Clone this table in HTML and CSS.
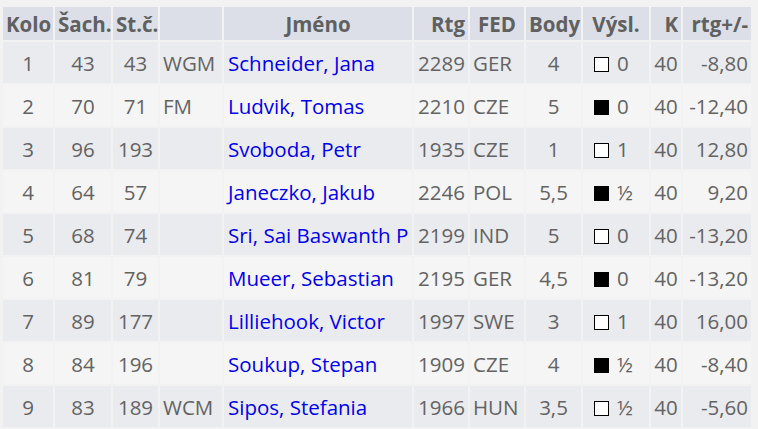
FILE: index.html
```html
<!DOCTYPE html>
<html lang="cs">
<head>
<meta charset="utf-8">
<link rel="stylesheet" href="styles.css">
</head>
<body>
<table class="games">
  <colgroup>
    <col class="w-kolo"><col class="w-sach"><col class="w-stc"><col class="w-tit"><col class="w-name">
    <col class="w-rtg"><col class="w-fed"><col class="w-body"><col class="w-res"><col class="w-k"><col class="w-diff">
  </colgroup>
  <thead>
    <tr>
      <th>Kolo</th><th>Šach.</th><th>St.č.</th><th></th><th>Jméno</th>
      <th class="r">Rtg</th><th>FED</th><th>Body</th><th>Výsl.</th><th class="r">K</th><th class="r">rtg+/-</th>
    </tr>
  </thead>
  <tbody>
    <tr class="odd"><td class="c">1</td><td class="c">43</td><td class="c">43</td><td class="tit">WGM</td><td class="name"><a href="#">Schneider, Jana</a></td><td class="r">2289</td><td class="fed">GER</td><td class="c">4</td><td class="res"><span class="sq w"></span>0</td><td class="k">40</td><td class="r d">-8,80</td></tr>
    <tr class="even"><td class="c">2</td><td class="c">70</td><td class="c">71</td><td class="tit">FM</td><td class="name"><a href="#">Ludvik, Tomas</a></td><td class="r">2210</td><td class="fed">CZE</td><td class="c">5</td><td class="res"><span class="sq b"></span>0</td><td class="k">40</td><td class="r d">-12,40</td></tr>
    <tr class="odd"><td class="c">3</td><td class="c">96</td><td class="c">193</td><td class="tit"></td><td class="name"><a href="#">Svoboda, Petr</a></td><td class="r">1935</td><td class="fed">CZE</td><td class="c">1</td><td class="res"><span class="sq w"></span>1</td><td class="k">40</td><td class="r d">12,80</td></tr>
    <tr class="even"><td class="c">4</td><td class="c">64</td><td class="c">57</td><td class="tit"></td><td class="name"><a href="#">Janeczko, Jakub</a></td><td class="r">2246</td><td class="fed">POL</td><td class="c">5,5</td><td class="res"><span class="sq b"></span>½</td><td class="k">40</td><td class="r d">9,20</td></tr>
    <tr class="odd"><td class="c">5</td><td class="c">68</td><td class="c">74</td><td class="tit"></td><td class="name"><a href="#">Sri, Sai Baswanth P</a></td><td class="r">2199</td><td class="fed">IND</td><td class="c">5</td><td class="res"><span class="sq w"></span>0</td><td class="k">40</td><td class="r d">-13,20</td></tr>
    <tr class="even"><td class="c">6</td><td class="c">81</td><td class="c">79</td><td class="tit"></td><td class="name"><a href="#">Mueer, Sebastian</a></td><td class="r">2195</td><td class="fed">GER</td><td class="c">4,5</td><td class="res"><span class="sq b"></span>0</td><td class="k">40</td><td class="r d">-13,20</td></tr>
    <tr class="odd"><td class="c">7</td><td class="c">89</td><td class="c">177</td><td class="tit"></td><td class="name"><a href="#">Lilliehook, Victor</a></td><td class="r">1997</td><td class="fed">SWE</td><td class="c">3</td><td class="res"><span class="sq w"></span>1</td><td class="k">40</td><td class="r d">16,00</td></tr>
    <tr class="even"><td class="c">8</td><td class="c">84</td><td class="c">196</td><td class="tit"></td><td class="name"><a href="#">Soukup, Stepan</a></td><td class="r">1909</td><td class="fed">CZE</td><td class="c">4</td><td class="res"><span class="sq b"></span>½</td><td class="k">40</td><td class="r d">-8,40</td></tr>
    <tr class="odd"><td class="c">9</td><td class="c">83</td><td class="c">189</td><td class="tit">WCM</td><td class="name"><a href="#">Sipos, Stefania</a></td><td class="r">1966</td><td class="fed">HUN</td><td class="c">3,5</td><td class="res"><span class="sq w"></span>½</td><td class="k">40</td><td class="r d">-5,60</td></tr>
  </tbody>
</table>
</body>
</html>
```
FILE: styles.css
```css
html, body {
  margin: 0;
  background: #f2f2f2;
}
body {
  padding: 5px 0 0 1px;
  font-family: "Open Sans", "Noto Sans", sans-serif;
  font-size: 20.5px;
  color: #636363;
}
.games {
  border-collapse: separate;
  border-spacing: 2px;
  table-layout: fixed;
  width: 751px;
}
.w-kolo { width: 50px; }
.w-sach { width: 56px; }
.w-stc { width: 45px; }
.w-tit { width: 62px; }
.w-name { width: 188px; }
.w-rtg { width: 54px; }
.w-fed { width: 54px; }
.w-body { width: 55px; }
.w-res { width: 66px; }
.w-k { width: 30px; }
.w-diff { width: 68px; }

th, td {
  padding: 0 3px;
  white-space: nowrap;
  overflow: visible;
}
th {
  background: #dcdfe7;
  height: 33px;
  font-weight: bold;
  text-align: center;
  color: #606060;
}
td {
  height: 41px;
}
tr.odd td { background: #eaebef; }
tr.even td { background: #f5f5f5; }
.c { text-align: center; }
.r { text-align: right; }
th.r { text-align: right; }
.tit { text-align: left; padding-left: 3px; }
.name { text-align: left; padding-left: 4px; }
.name a { color: #0000ee; text-decoration: none; }
.fed { text-align: left; padding-left: 3px; }
.res { text-align: left; padding-left: 11px; }
.k { text-align: center; }
.d { padding-right: 3px; }
.sq {
  display: inline-block;
  width: 13px;
  height: 13px;
  border: 1px solid #000;
  margin-right: 8px;
  vertical-align: -1px;
  box-sizing: content-box;
}
.sq.w { background: #fff; }
.sq.b { background: #000; }
```
